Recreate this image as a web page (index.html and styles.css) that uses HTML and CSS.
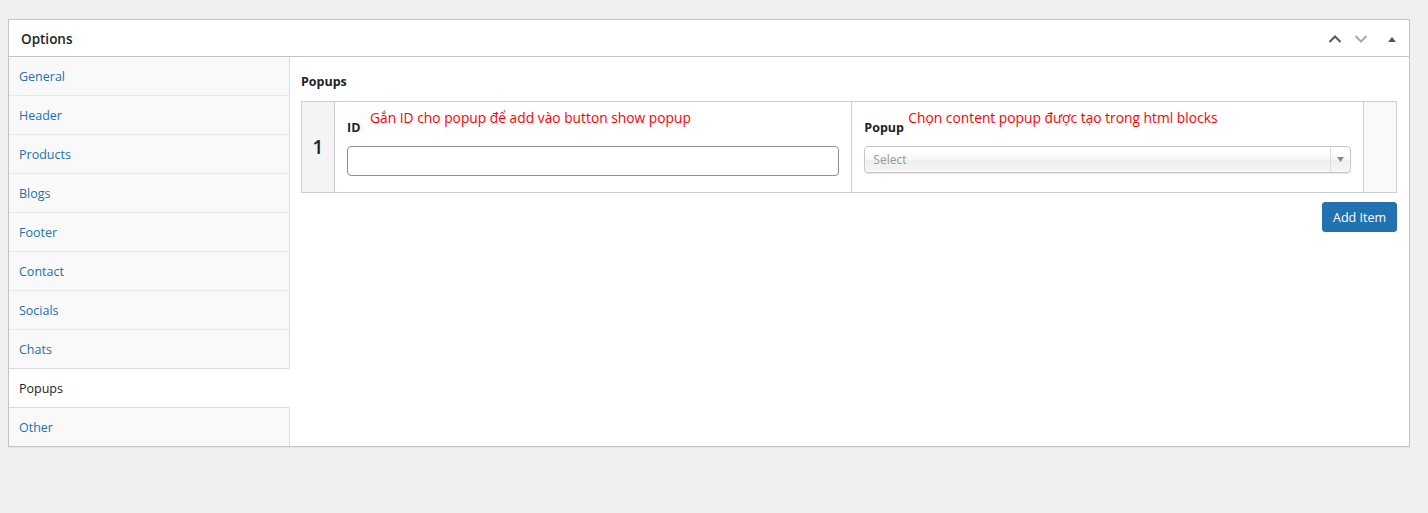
FILE: index.html
```html
<!DOCTYPE html>
<html>
<head>
<meta charset="utf-8">
<link rel="stylesheet" href="styles.css">
</head>
<body>
<div class="postbox">
  <div class="postbox-header">
    <h2 class="hndle">Options</h2>
    <div class="handle-actions">
      <svg class="hicon" width="14" height="10" viewBox="0 0 14 10"><path d="M1.5 8 L7 2.5 L12.5 8" fill="none" stroke="#50575e" stroke-width="2"/></svg>
      <svg class="hicon" width="14" height="10" viewBox="0 0 14 10"><path d="M1.5 2 L7 7.5 L12.5 2" fill="none" stroke="#a7aaad" stroke-width="2"/></svg>
      <svg class="hicon tri" width="10" height="8" viewBox="0 0 10 8"><path d="M1 7 L5 2 L9 7 Z" fill="#50575e"/></svg>
    </div>
  </div>
  <div class="inside">
    <ul class="tabs">
      <li class="tab"><a>General</a></li>
      <li class="tab"><a>Header</a></li>
      <li class="tab"><a>Products</a></li>
      <li class="tab"><a>Blogs</a></li>
      <li class="tab"><a>Footer</a></li>
      <li class="tab"><a>Contact</a></li>
      <li class="tab"><a>Socials</a></li>
      <li class="tab"><a>Chats</a></li>
      <li class="tab active"><a>Popups</a></li>
      <li class="tab"><a>Other</a></li>
    </ul>
    <div class="panel">
      <div class="field-title">Popups</div>
      <div class="repeater">
        <div class="row-num">1</div>
        <div class="cell cell-id">
          <div class="lbl">ID</div>
          <input class="text-input" type="text">
          <span class="note note-id">Gắn ID cho popup để add vào button show popup</span>
        </div>
        <div class="cell cell-popup">
          <div class="lbl">Popup</div>
          <div class="select">
            <span class="sel-text">Select</span>
            <span class="sel-arrow"><svg width="7" height="5" viewBox="0 0 7 5"><path d="M0 0 L7 0 L3.5 5 Z" fill="#888"/></svg></span>
          </div>
          <span class="note note-popup">Chọn content popup được tạo trong html blocks</span>
        </div>
        <div class="row-end"></div>
      </div>
      <div class="actions">
        <button class="btn">Add Item</button>
      </div>
    </div>
  </div>
</div>
</body>
</html>
```

FILE: styles.css
```css
html, body {
  margin: 0;
  padding: 0;
  background: #f0f0f1;
}
body {
  font-family: "Open Sans", "Noto Sans", sans-serif;
  font-size: 12.5px;
  color: #1d2327;
  padding: 19px 18px 0 8px;
  height: 513px;
  box-sizing: border-box;
}
.postbox {
  background: #fff;
  border: 1px solid #c3c4c7;
  box-shadow: 0 1px 1px rgba(0,0,0,0.04);
}
.postbox-header {
  display: flex;
  align-items: center;
  justify-content: space-between;
  height: 36px;
  border-bottom: 1px solid #c3c4c7;
}
.hndle {
  margin: 2px 0 0 0;
  padding-left: 12px;
  font-size: 13.5px;
  font-weight: 600;
  color: #1d2327;
}
.handle-actions {
  display: flex;
  align-items: center;
  padding-right: 12px;
  padding-top: 2px;
}
.hicon {
  display: block;
  margin-left: 12px;
}
.hicon.tri {
  margin-left: 19px;
}
.inside {
  display: flex;
}
.tabs {
  list-style: none;
  margin: 0;
  padding: 0;
  width: 281px;
  flex: none;
}
.tab {
  height: 38px;
  border-bottom: 1px solid #e8e8e8;
  border-right: 1px solid #dcdcde;
  background: #f9f9f9;
  display: flex;
  align-items: center;
  padding-left: 10px;
  box-sizing: content-box;
}
.tab a {
  color: #2271b1;
}
.tab.active {
  background: #fff;
  border-right-color: #fff;
  border-top: 1px solid #dcdcde;
  margin-top: -1px;
  border-bottom: 1px solid #dcdcde;
}
.tab.active a {
  color: #1d2327;
}
.tab:last-child {
  border-bottom: none;
}
.panel {
  flex: 1;
  padding: 16px 12px 0 11px;
}
.field-title {
  font-weight: 700;
  font-size: 12.5px;
  margin-bottom: 11px;
}
.repeater {
  display: flex;
  border: 1px solid #ccd0d4;
  height: 90px;
}
.row-num {
  width: 32px;
  flex: none;
  background: #f4f4f4;
  border-right: 1px solid #ccd0d4;
  display: flex;
  align-items: center;
  justify-content: center;
  font-size: 19px;
  font-weight: 600;
  color: #1d2327;
}
.cell {
  position: relative;
  padding: 17px 12px 0 12px;
  border-right: 1px solid #ccd0d4;
  flex-basis: 0;
}
.cell-id {
  flex-grow: 518;
}
.cell-popup {
  flex-grow: 512;
}
.lbl {
  font-weight: 700;
  font-size: 12.5px;
  margin-bottom: 10px;
}
.text-input {
  display: block;
  width: 100%;
  height: 30px;
  box-sizing: border-box;
  border: 1px solid #8c8f94;
  border-radius: 4px;
  background: #fff;
  margin: 0;
}
.select {
  display: flex;
  align-items: center;
  height: 27px;
  margin-top: 1px;
  box-sizing: border-box;
  border: 1px solid #c6c6c6;
  border-radius: 4px;
  background: linear-gradient(#fff 20%, #f6f6f6 50%, #eee 52%, #f4f4f4 100%);
  box-shadow: 0 0 3px #fff inset, 0 1px 1px rgba(0,0,0,0.1);
}
.sel-text {
  flex: 1;
  padding-left: 8px;
  color: #999;
  font-size: 12px;
}
.sel-arrow {
  width: 19px;
  align-self: stretch;
  border-left: 1px solid #ddd;
  display: flex;
  align-items: center;
  justify-content: center;
}
.row-end {
  width: 32px;
  flex: none;
  background: #f9f9f9;
}
.note {
  position: absolute;
  top: 6px;
  color: #ff0000;
  font-size: 13.8px;
  white-space: nowrap;
}
.note-id {
  left: 35px;
}
.note-popup {
  left: 56px;
}
.actions {
  display: flex;
  justify-content: flex-end;
  padding-top: 9px;
  padding-bottom: 212px;
}
.btn {
  background: #2271b1;
  border: 1px solid #2271b1;
  color: #fff;
  border-radius: 3px;
  font-family: inherit;
  font-size: 12.5px;
  height: 30px;
  padding: 0 10px;
  margin-right: 0;
}
```
